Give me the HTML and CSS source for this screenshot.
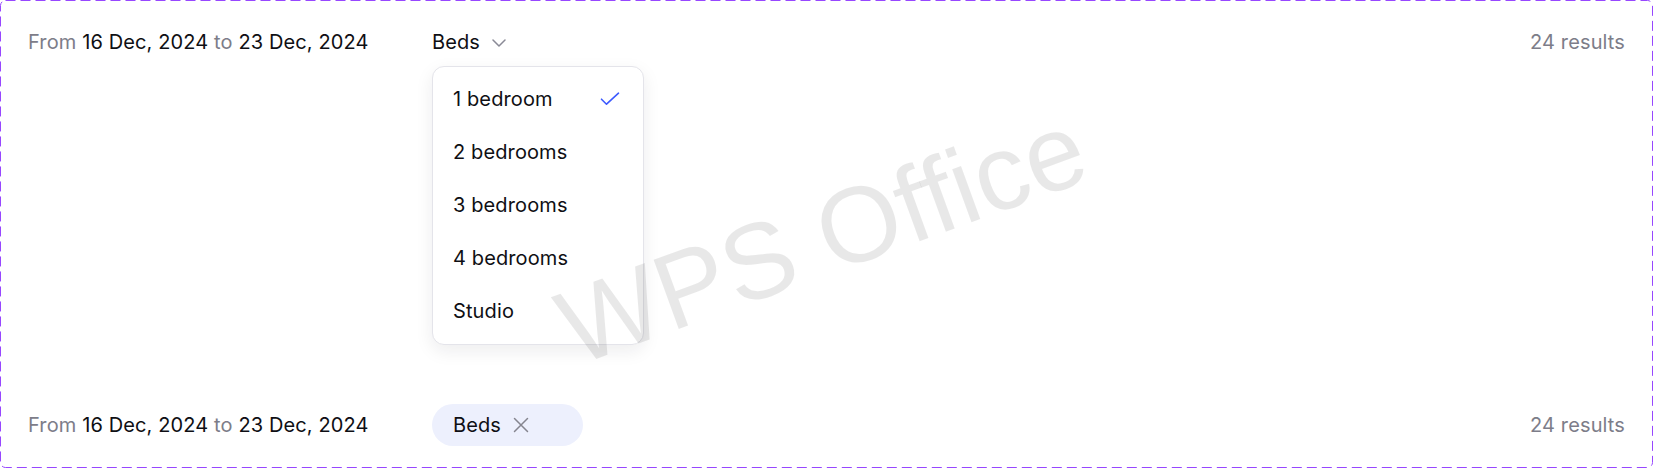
FILE: index.html
```html
<!DOCTYPE html>
<html lang="en">
<head>
<meta charset="utf-8">
<title>Beds filter</title>
<link rel="stylesheet" href="styles.css">
</head>
<body>
<div class="board">
  <svg class="frame" width="1653" height="468" viewBox="0 0 1653 468" aria-hidden="true">
    <rect x="0.5" y="0.5" width="1652" height="467" rx="5" ry="5" fill="none" stroke="#9747ff" stroke-width="1" stroke-dasharray="10 5"/>
  </svg>

  <div class="row row-open">
    <div class="dates"><span class="muted">From</span> 16 Dec, 2024 <span class="muted">to</span> 23 Dec, 2024</div>
    <div class="filter">
      <div class="trigger">
        <span>Beds</span>
        <svg class="chevron" width="14" height="8" viewBox="0 0 14 8" aria-hidden="true"><path d="M1 1l6 6 6-6" fill="none" stroke="#8a8a96" stroke-width="1.5" stroke-linecap="round" stroke-linejoin="round"/></svg>
      </div>
      <ul class="menu">
        <li class="item">1 bedroom
          <svg class="check" width="20" height="14" viewBox="0 0 20 14" aria-hidden="true"><path d="M1.5 7.2l5 5L18.5 1.2" fill="none" stroke="#3d5afe" stroke-width="1.6" stroke-linecap="round" stroke-linejoin="round"/></svg>
        </li>
        <li class="item">2 bedrooms</li>
        <li class="item">3 bedrooms</li>
        <li class="item">4 bedrooms</li>
        <li class="item">Studio</li>
      </ul>
    </div>
    <div class="results">24 results</div>
  </div>

  <div class="row row-closed">
    <div class="dates"><span class="muted">From</span> 16 Dec, 2024 <span class="muted">to</span> 23 Dec, 2024</div>
    <div class="filter">
      <div class="chip">
        <span>Beds</span>
        <svg class="close" width="16" height="16" viewBox="0 0 16 16" aria-hidden="true"><path d="M1.5 1.5l13 13M14.5 1.5l-13 13" fill="none" stroke="#85858f" stroke-width="1.5" stroke-linecap="round"/></svg>
      </div>
    </div>
    <div class="results">24 results</div>
  </div>

  <div class="watermark" aria-hidden="true">WPS Office</div>
</div>
</body>
</html>
```

FILE: styles.css
```css
* { box-sizing: border-box; }

html, body {
  margin: 0;
  padding: 0;
  background: #ffffff;
}

body {
  font-family: "Inter", "Noto Sans", sans-serif;
  color: #0f0f14;
  font-size: 20px;
  line-height: 24px;
  letter-spacing: 0.12px;
}

.board {
  position: relative;
  width: 1653px;
  height: 468px;
  padding: 30px 28px 0 28px;
  overflow: hidden;
}

.frame {
  position: absolute;
  left: 0;
  top: 0;
  pointer-events: none;
}

.row {
  display: grid;
  grid-template-columns: 404px 1fr auto;
}

.row-open {
  align-items: start;
}

.row-closed {
  align-items: center;
  margin-top: 59px;
}

.muted {
  color: #7d7d89;
}

.results {
  color: #7d7d89;
  text-align: right;
}

.filter {
  display: flex;
  flex-direction: column;
  align-items: flex-start;
}

.trigger {
  display: flex;
  align-items: center;
  gap: 12px;
  height: 24px;
}

.chevron {
  display: block;
  margin-top: 1px;
}

.menu {
  list-style: none;
  margin: 12px 0 0 0;
  padding: 5px 0 7px 0;
  width: 212px;
  background: #ffffff;
  border: 1px solid #e4e4ea;
  border-radius: 12px;
  box-shadow: 0 6px 18px rgba(20, 20, 40, 0.08);
}

.item {
  display: flex;
  align-items: center;
  justify-content: space-between;
  height: 53px;
  padding: 0 23px 0 20px;
}

.check {
  display: block;
}

.chip {
  display: flex;
  align-items: center;
  gap: 12px;
  width: 151px;
  height: 42px;
  padding-left: 21px;
  border-radius: 21px;
  background: #edf0fd;
}

.close {
  display: block;
}

.watermark {
  position: absolute;
  left: 822px;
  top: 238px;
  transform: translate(-50%, -50%) rotate(-20deg);
  font-family: "Liberation Sans", Arial, sans-serif;
  font-size: 107px;
  line-height: 1;
  letter-spacing: 0;
  white-space: nowrap;
  color: rgba(0, 0, 0, 0.09);
  pointer-events: none;
}
```
